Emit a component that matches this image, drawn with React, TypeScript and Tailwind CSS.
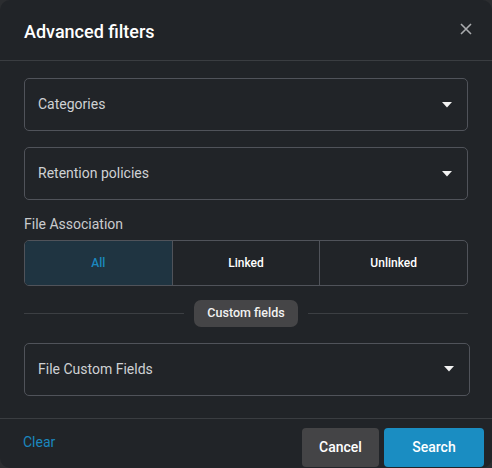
import React, { useState } from 'react';

const font = { fontFamily: 'Roboto, "Noto Sans", sans-serif' };

const Caret = () => (
  <svg width="10" height="6" viewBox="0 0 10 6" className="shrink-0">
    <path d="M0 0h10L5 5.5z" fill="#f2f2f2" />
  </svg>
);

const SelectBox: React.FC<{ label: string; wide?: boolean }> = ({ label, wide }) => (
  <button
    type="button"
    className={`flex h-[53px] items-center justify-between rounded-[5px] border border-[#50535a] pl-[13px] pr-[15px] text-left text-[14px] text-[#cfd1d4] ${wide ? 'w-[446px]' : 'w-[444px]'}`}
  >
    <span>{label}</span>
    <Caret />
  </button>
);

export default function App() {
  const [assoc, setAssoc] = useState('All');
  const options = ['All', 'Linked', 'Unlinked'];

  return (
    <div className="h-[468px] w-[492px] bg-[#2b2d30]" style={font}>
      <div className="flex h-full w-full flex-col rounded-[10px] bg-[#212428]">
        {/* header */}
        <div className="flex h-[61px] items-center justify-between border-b border-[#3a3d41] pl-6 pr-[20px]">
          <h2 className="pt-[2px] text-[18px] font-medium text-white">Advanced filters</h2>
          <button type="button" className="mb-[2px] text-[#a9abae]">
            <svg width="12" height="12" viewBox="0 0 12 12">
              <path d="M1 1l10 10M11 1L1 11" stroke="currentColor" strokeWidth="1.6" />
            </svg>
          </button>
        </div>

        {/* body */}
        <div className="flex flex-1 flex-col px-6 pt-[17px]">
          <SelectBox label="Categories" />
          <div className="mt-[16px]">
            <SelectBox label="Retention policies" />
          </div>

          <div className="mt-[14px] text-[14px] text-[#c9cbce]">File Association</div>
          <div className="mt-[5px] flex h-[46px] w-[444px] overflow-hidden rounded-[5px] border border-[#50535a]">
            {options.map((o, i) => (
              <button
                key={o}
                type="button"
                onClick={() => setAssoc(o)}
                className={`flex flex-1 items-center justify-center text-[12px] font-medium ${i > 0 ? 'border-l border-[#50535a]' : ''} ${assoc === o ? 'bg-[#1f3441] text-[#1b88bf]' : 'text-white'}`}
              >
                {o}
              </button>
            ))}
          </div>

          <div className="mt-[14px] flex items-center">
            <div className="h-px flex-1 bg-[#3c3f43]" />
            <span className="mx-[10px] rounded-[7px] bg-[#454547] px-[13px] py-[4px] text-[12.5px] font-medium text-[#f2f2f2]">
              Custom fields
            </span>
            <div className="h-px flex-1 bg-[#3c3f43]" />
          </div>

          <div className="mt-[16px]">
            <SelectBox label="File Custom Fields" wide />
          </div>
        </div>

        {/* footer */}
        <div className="flex h-[50px] items-center justify-between border-t border-[#3a3d41] pl-[23px] pr-2">
          <button type="button" className="pb-[2px] text-[14px] text-[#1b87bf]">Clear</button>
          <div className="flex gap-[5px] pt-[8px]">
            <button type="button" className="h-[39px] w-[77px] rounded-[4px] bg-[#444446] text-[14px] font-medium text-white">
              Cancel
            </button>
            <button type="button" className="h-[39px] w-[100px] rounded-[4px] bg-[#1a8dc2] text-[14px] font-medium text-white">
              Search
            </button>
          </div>
        </div>
      </div>
    </div>
  );
}
